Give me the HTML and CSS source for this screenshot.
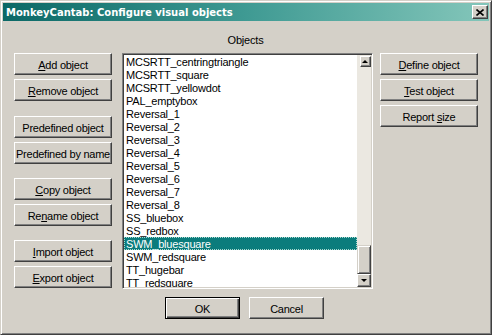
FILE: index.html
```html
<!DOCTYPE html>
<html>
<head>
<meta charset="utf-8">
<title>MonkeyCantab: Configure visual objects</title>
<link rel="stylesheet" href="styles.css">
</head>
<body>
<div class="window">
  <div class="titlebar">
    <span class="title">MonkeyCantab: Configure visual objects</span>
    <button class="close" aria-label="Close">
      <svg width="8" height="7" viewBox="0 0 8 7"><path d="M0.5 0.5 L7.5 6.5 M7.5 0.5 L0.5 6.5" stroke="#000" stroke-width="1.6" fill="none"/></svg>
    </button>
  </div>
  <div class="client">
    <div class="main">
      <div class="col-left">
        <div class="group g1">
          <button class="btn"><span><u>A</u>dd object</span></button>
          <button class="btn"><span><u>R</u>emove object</span></button>
        </div>
        <div class="group g2">
          <button class="btn"><span>Predefined object</span></button>
          <button class="btn"><span>Predefined by name</span></button>
        </div>
        <div class="group g3">
          <button class="btn"><span><u>C</u>opy object</span></button>
          <button class="btn"><span>Re<u>n</u>ame object</span></button>
        </div>
        <div class="group g3">
          <button class="btn"><span><u>I</u>mport object</span></button>
          <button class="btn"><span><u>E</u>xport object</span></button>
        </div>
      </div>
      <div class="col-mid">
        <div class="label">Objects</div>
        <div class="listbox">
          <div class="items">
            <div class="row">MCSRTT_centringtriangle</div>
            <div class="row">MCSRTT_square</div>
            <div class="row">MCSRTT_yellowdot</div>
            <div class="row">PAL_emptybox</div>
            <div class="row">Reversal_1</div>
            <div class="row">Reversal_2</div>
            <div class="row">Reversal_3</div>
            <div class="row">Reversal_4</div>
            <div class="row">Reversal_5</div>
            <div class="row">Reversal_6</div>
            <div class="row">Reversal_7</div>
            <div class="row">Reversal_8</div>
            <div class="row">SS_bluebox</div>
            <div class="row">SS_redbox</div>
            <div class="row selected">SWM_bluesquare</div>
            <div class="row">SWM_redsquare</div>
            <div class="row">TT_hugebar</div>
            <div class="row">TT_redsquare</div>
          </div>
          <div class="scrollbar">
            <div class="sb-top"><div class="sb-btn sb-up"><i class="arrow-up"></i></div></div>
            <div class="sb-track"></div>
            <div class="sb-thumb"></div>
            <div class="sb-btn sb-down"><i class="arrow-down"></i></div>
          </div>
        </div>
      </div>
      <div class="col-right">
        <button class="btn"><span><u>D</u>efine object</span></button>
        <button class="btn"><span><u>T</u>est object</span></button>
        <button class="btn"><span>Report <u>s</u>ize</span></button>
      </div>
    </div>
    <div class="footer">
      <button class="btn small default"><span>OK</span></button>
      <button class="btn small"><span>Cancel</span></button>
    </div>
  </div>
</div>
</body>
</html>
```

FILE: styles.css
```css
html, body {
  margin: 0;
  padding: 0;
  background: #d4d0c8;
}

body {
  font-family: "Liberation Sans", Arial, sans-serif;
  font-size: 11px;
  color: #000;
}

.window {
  width: 492px;
  height: 335px;
  box-sizing: border-box;
  border: 1px solid;
  border-color: #d4d0c8 #404040 #404040 #d4d0c8;
  box-shadow: inset 1px 1px #ffffff, inset -1px -1px #808080;
  padding: 2px;
  background: #d4d0c8;
  display: flex;
  flex-direction: column;
}

/* Title bar */
.titlebar {
  height: 18px;
  flex: none;
  display: flex;
  align-items: center;
  padding-left: 3px;
  background: linear-gradient(to right, #0b6866 0%, #3f9a93 50%, #84c6ba 100%);
}

.title {
  flex: 1;
  color: #fff;
  font-family: "DejaVu Sans", Verdana, sans-serif;
  font-weight: bold;
  font-size: 10px;
  line-height: 18px;
  white-space: nowrap;
  padding-top: 1px;
}

.close {
  width: 16px;
  height: 14px;
  margin: 0 1px 0 0;
  padding: 0;
  box-sizing: border-box;
  background: #d4d0c8;
  border: 1px solid;
  border-color: #ffffff #404040 #404040 #ffffff;
  box-shadow: inset -1px -1px #808080;
  display: flex;
  align-items: center;
  justify-content: center;
}

.close svg {
  display: block;
  margin-left: -1px;
}

/* Client area */
.client {
  flex: 1;
  display: flex;
  flex-direction: column;
}

.main {
  display: flex;
  align-items: flex-start;
}

.col-left {
  width: 98px;
  margin-left: 11px;
  display: flex;
  flex-direction: column;
}

.group {
  display: flex;
  flex-direction: column;
  gap: 4px;
}

.g1 { margin-top: 32px; }
.g2 { margin-top: 15px; }
.g3 { margin-top: 14px; }

.col-mid {
  width: 251px;
  margin-left: 10px;
  display: flex;
  flex-direction: column;
}

.label {
  margin-top: 13px;
  height: 13px;
  line-height: 13px;
  text-align: center;
  padding-right: 4px;
  letter-spacing: -0.2px;
}

.col-right {
  width: 98px;
  margin-left: 7px;
  margin-top: 32px;
  display: flex;
  flex-direction: column;
  gap: 4px;
}

/* Buttons */
.btn {
  box-sizing: border-box;
  width: 98px;
  height: 22px;
  margin: 0;
  padding: 2px 0 0 0;
  background: #d4d0c8;
  border: 1px solid;
  border-color: #ffffff #404040 #404040 #ffffff;
  box-shadow: inset -1px -1px #808080;
  font-family: "Liberation Sans", Arial, sans-serif;
  font-size: 11px;
  line-height: 13px;
  letter-spacing: -0.25px;
  color: #000;
  display: flex;
  align-items: center;
  justify-content: center;
  white-space: nowrap;
}

.btn u {
  text-decoration: underline;
  text-underline-offset: 1px;
}

.btn.small {
  width: 75px;
}

.btn.default {
  border: 1px solid #000;
  box-shadow: inset 1px 1px #ffffff, inset -1px -1px #404040, inset -2px -2px #808080;
}

/* List box */
.listbox {
  margin-top: 6px;
  height: 236px;
  box-sizing: border-box;
  border: 1px solid;
  border-color: #808080 #ffffff #ffffff #808080;
  box-shadow: inset 1px 1px #404040, inset -1px -1px #d4d0c8;
  padding: 1px;
  display: flex;
  background: #d4d0c8;
}

.items {
  flex: 1;
  background: #fff;
  overflow: hidden;
}

.row {
  height: 13px;
  line-height: 13px;
  padding-left: 2px;
  white-space: nowrap;
  letter-spacing: -0.2px;
  padding-top: 1px;
  box-sizing: border-box;
}

.row.selected {
  background: #0b7c7c;
  color: #fff;
  outline: 1px dotted #a8d8d0;
  outline-offset: -1px;
}

.scrollbar {
  width: 14px;
  flex: none;
  display: flex;
  flex-direction: column;
  background: #ebe8e1;
}

.sb-top {
  display: flex;
  justify-content: flex-end;
  padding-top: 1px;
}

.sb-track {
  flex: 1;
}

.sb-btn {
  box-sizing: border-box;
  background: #d4d0c8;
  border: 1px solid;
  border-color: #ffffff #404040 #404040 #ffffff;
  box-shadow: inset -1px -1px #808080;
  display: flex;
  align-items: center;
  justify-content: center;
}

.sb-up {
  width: 11px;
  height: 11px;
}

.sb-down {
  width: 14px;
  height: 13px;
}

.sb-thumb {
  height: 29px;
  box-sizing: border-box;
  background: #d4d0c8;
  border: 1px solid;
  border-color: #d4d0c8 #404040 #404040 #d4d0c8;
  box-shadow: inset 1px 1px #ffffff, inset -1px -1px #808080;
}

.arrow-up {
  width: 0;
  height: 0;
  border-left: 3px solid transparent;
  border-right: 3px solid transparent;
  border-bottom: 3px solid #000;
  margin-right: 1px;
  margin-bottom: 1px;
}

.arrow-down {
  width: 0;
  height: 0;
  border-left: 3px solid transparent;
  border-right: 3px solid transparent;
  border-top: 3px solid #000;
  margin-right: 1px;
  margin-bottom: 1px;
}

/* Footer */
.footer {
  display: flex;
  gap: 9px;
  margin-left: 162px;
  margin-top: 8px;
}
```
